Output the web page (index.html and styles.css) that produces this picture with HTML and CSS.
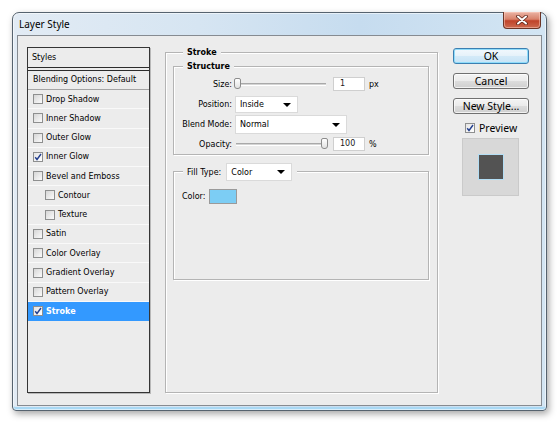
FILE: index.html
```html
<!DOCTYPE html>
<html lang="en">

<head>
  <meta charset="UTF-8">
  <title>Layer Style</title>
  <link rel="stylesheet" href="styles.css">
</head>

<body>
  <div class="window">
    <div class="titlebar">
      <span class="title">Layer Style</span>
      <span class="close-btn">
        <svg width="14" height="10" viewBox="0 0 14 10">
          <path d="M3 1.5 L11 8.5 M11 1.5 L3 8.5" stroke="#5a2418" stroke-width="3.6" stroke-linecap="round" />
          <path d="M3 1.5 L11 8.5 M11 1.5 L3 8.5" stroke="#fff" stroke-width="2" stroke-linecap="round" />
        </svg>
      </span>
    </div>

    <div class="client">
      <!-- styles list -->
      <div class="styles-list">
        <div class="list-head">Styles</div>
        <div class="list-blend">Blending Options: Default</div>
        <div class="list-item"><span class="cb"></span>Drop Shadow</div>
        <div class="list-item"><span class="cb"></span>Inner Shadow</div>
        <div class="list-item"><span class="cb"></span>Outer Glow</div>
        <div class="list-item"><span class="cb checked"><svg width="8" height="8" viewBox="0 0 8 8"><path d="M1.2 4.2 L3 6.5 L7 1" fill="none" stroke="#233f8f" stroke-width="1.4" /></svg></span>Inner Glow</div>
        <div class="list-item"><span class="cb"></span>Bevel and Emboss</div>
        <div class="list-item sub"><span class="cb"></span>Contour</div>
        <div class="list-item sub"><span class="cb"></span>Texture</div>
        <div class="list-item"><span class="cb"></span>Satin</div>
        <div class="list-item"><span class="cb"></span>Color Overlay</div>
        <div class="list-item"><span class="cb"></span>Gradient Overlay</div>
        <div class="list-item"><span class="cb"></span>Pattern Overlay</div>
        <div class="list-item selected"><span class="cb checked"><svg width="8" height="8" viewBox="0 0 8 8"><path d="M1.2 4.2 L3 6.5 L7 1" fill="none" stroke="#233f8f" stroke-width="1.4" /></svg></span>Stroke</div>
      </div>

      <!-- settings -->
      <div class="main">
        <div class="group stroke-group">
          <div class="group-title">Stroke</div>

          <div class="group structure-group">
            <div class="group-title">Structure</div>
            <div class="fields">
              <div class="field-label">Size:</div>
              <div class="field-value">
                <div class="slider"><span class="thumb thumb-min"></span></div>
                <span class="num-input">1</span>
                <span class="unit">px</span>
              </div>

              <div class="field-label">Position:</div>
              <div class="field-value">
                <span class="select select-position">Inside<i class="arrow"></i></span>
              </div>

              <div class="field-label">Blend Mode:</div>
              <div class="field-value">
                <span class="select select-blend">Normal<i class="arrow"></i></span>
              </div>

              <div class="field-label">Opacity:</div>
              <div class="field-value">
                <div class="slider"><span class="thumb thumb-max"></span></div>
                <span class="num-input">100</span>
                <span class="unit">%</span>
              </div>
            </div>
          </div>

          <div class="group fill-group">
            <div class="group-title fill-title">
              Fill Type:
              <span class="select select-fill">Color<i class="arrow"></i></span>
            </div>
            <div class="color-row">
              Color:
              <span class="swatch"></span>
            </div>
          </div>
        </div>
      </div>

      <!-- buttons -->
      <div class="side">
        <button class="btn btn-default">OK</button>
        <button class="btn">Cancel</button>
        <button class="btn">New Style...</button>
        <label class="preview-check">
          <span class="cb checked"><svg width="8" height="8" viewBox="0 0 8 8"><path d="M1.2 4.2 L3 6.5 L7 1" fill="none" stroke="#233f8f" stroke-width="1.4" /></svg></span>
          Preview
        </label>
        <div class="preview-box">
          <div class="preview-swatch"></div>
        </div>
      </div>
    </div>
  </div>
</body>

</html>
```

FILE: styles.css
```css
* {
  box-sizing: border-box;
  margin: 0;
  padding: 0;
}

body {
  background: #fff;
  font-family: "DejaVu Sans", "Liberation Sans", sans-serif;
  font-size: 8px;
  color: #000;
  padding: 12px;
}

.window {
  width: 535px;
  height: 399px;
  display: flex;
  flex-direction: column;
  padding: 0 4px 4px;
  border: 1px solid #56636f;
  border-radius: 7px 7px 4px 4px;
  background: linear-gradient(to right, #e2ebf4 0%, #d6e5f2 35%, #c6dcef 65%, #d3e5f3 100%);
  box-shadow: inset 0 0 0 1px rgba(255, 255, 255, 0.55), inset 0 -3px 0 #a8d8f4, 2px 3px 7px rgba(0, 0, 0, 0.35);
}

/* title bar */

.titlebar {
  height: 22px;
  display: flex;
  justify-content: space-between;
  align-items: flex-start;
}

.title {
  font-family: "Noto Sans", sans-serif;
  font-size: 10px;
  line-height: 22px;
  margin-left: 2px;
  color: #000;
}

.close-btn {
  width: 38px;
  height: 17px;
  margin-top: -1px;
  margin-right: 1px;
  display: flex;
  align-items: center;
  justify-content: center;
  border: 1px solid #6b3426;
  border-top: none;
  border-radius: 0 0 4px 4px;
  background: linear-gradient(#eab3a4 0%, #d8826b 45%, #c0432a 55%, #cc6a4f 100%);
  box-shadow: inset 0 0 0 1px rgba(255, 210, 195, 0.5);
}

/* client area */

.client {
  flex: 1;
  display: flex;
  padding: 11px 12px 12px 9px;
  background: #ececec;
  border: 1px solid #868b91;
}

.styles-list {
  width: 123px;
  border: 1px solid #353535;
  box-shadow: 1px 1px 0 #b8b8b8;
  background: #ececec;
}

.list-head {
  height: 20px;
  line-height: 19px;
  padding-left: 4px;
  border-bottom: 1px solid #2c2c2c;
  margin-bottom: 2px;
}

.list-blend {
  height: 20px;
  line-height: 18px;
  padding-left: 5px;
  border-top: 1px solid #2c2c2c;
  border-bottom: 1px solid #a4a4a4;
}

.list-item {
  height: 19.27px;
  display: flex;
  align-items: center;
  gap: 3px;
  padding-left: 5px;
  border-bottom: 1px solid #f9f9f9;
}

.list-item.sub {
  padding-left: 17px;
}

.list-item.selected {
  background: #3399ff;
  color: #fff;
  font-weight: bold;
  border-bottom-color: #3399ff;
}

.cb {
  width: 10px;
  height: 10px;
  flex: none;
  display: inline-flex;
  align-items: center;
  justify-content: center;
  border: 1px solid #8e8f8f;
  background: linear-gradient(135deg, #d6d6d6, #fbfbfb);
}

.cb.checked {
  background: linear-gradient(135deg, #e4e4e4, #ffffff);
}

/* groups */

.main {
  width: 273px;
  margin: 5px 15px 0;
  display: flex;
  flex-direction: column;
}

.group {
  border: 1px solid #b4b4b4;
  box-shadow: inset 1px 1px 0 #fff, 1px 1px 0 #fff;
}

.group-title {
  display: block;
  width: fit-content;
  margin: -7px 0 0 10px;
  padding: 0 4px;
  line-height: 13px;
  background: #ececec;
  font-weight: bold;
}

.stroke-group {
  flex: 1;
  padding: 0 8px 0 7px;
}

.structure-group {
  margin-top: 7px;
}

.structure-group .group-title {
  margin-left: 9px;
}

.fields {
  display: grid;
  grid-template-columns: 58px 1fr;
  grid-auto-rows: 20px;
  column-gap: 3px;
  align-items: center;
  margin-top: 1px;
}

.field-label {
  text-align: right;
}

.field-value {
  display: flex;
  align-items: center;
}

.slider {
  position: relative;
  width: 90px;
  height: 3px;
  margin-left: 1px;
  border-top: 1px solid #a9a9a9;
  border-bottom: 1px solid #fff;
  background: #d4d4d4;
}

.thumb {
  position: absolute;
  top: -6px;
  width: 7px;
  height: 11px;
  border: 1px solid #8c8c8c;
  border-radius: 2px 2px 3px 3px;
  background: linear-gradient(#ffffff, #e2e2e2);
}

.thumb-min {
  left: -2px;
}

.thumb-max {
  right: -2px;
}

.num-input {
  width: 32px;
  height: 14px;
  margin-left: 7px;
  padding-left: 6px;
  line-height: 12px;
  background: #fff;
  border: 1px solid #cfcfcf;
  color: #1a1a1a;
}

.unit {
  margin-left: 4px;
}

.select {
  position: relative;
  height: 17px;
  padding-left: 4px;
  line-height: 16px;
  background: #fff;
  border: 1px solid #dadada;
  font-weight: normal;
}

.arrow {
  position: absolute;
  right: 6px;
  top: 6px;
  width: 0;
  height: 0;
  border-left: 4px solid transparent;
  border-right: 4px solid transparent;
  border-top: 4px solid #000;
}

.select-position {
  width: 63px;
}

.select-blend {
  width: 112px;
  height: 19px;
  line-height: 18px;
}

.select-blend .arrow {
  top: 7px;
}

.select-fill {
  width: 66px;
  height: 18px;
  margin-left: 5px;
  line-height: 17px;
}

.fill-group {
  height: 109px;
  margin-top: 16px;
}

.fill-title {
  display: flex;
  align-items: center;
  margin: -9px 0 0 9px;
  padding: 0 5px 0 4px;
  height: 18px;
  font-weight: normal;
}

.color-row {
  display: flex;
  align-items: center;
  gap: 4px;
  margin-top: 8px;
  padding-left: 8px;
}

.swatch {
  width: 28px;
  height: 15px;
  background: #7ccdf4;
  border: 1px solid #9a9a9a;
}

/* buttons column */

.side {
  width: 76px;
  display: flex;
  flex-direction: column;
  padding-top: 1px;
}

.btn {
  height: 16px;
  margin-bottom: 9px;
  font-family: "Noto Sans", sans-serif;
  font-size: 10.5px;
  line-height: 14px;
  color: #000;
  border: 1px solid #707070;
  border-radius: 3px;
  background: linear-gradient(#f4f4f4 0%, #ebebeb 48%, #dcdcdc 52%, #cfcfcf 100%);
  box-shadow: inset 0 0 0 1px rgba(255, 255, 255, 0.7);
}

.btn-default {
  border-color: #3c7fb1;
  background: linear-gradient(#f1f8fd 0%, #e6f2fa 48%, #d3eaf8 52%, #c7e3f6 100%);
  box-shadow: inset 0 0 0 1px #8fdcfa;
}

.preview-check {
  display: flex;
  align-items: center;
  gap: 4px;
  height: 14px;
  margin: -2px 0 0 12px;
  font-family: "Noto Sans", sans-serif;
  font-size: 10.5px;
}

.preview-box {
  width: 57px;
  height: 58px;
  margin: 3px 0 0 9px;
  display: flex;
  align-items: center;
  justify-content: center;
  background: #d8d8d8;
  border: 1px solid #cacaca;
}

.preview-swatch {
  width: 26px;
  height: 26px;
  background: #535353;
  border: 1px solid #b3def5;
}
```
